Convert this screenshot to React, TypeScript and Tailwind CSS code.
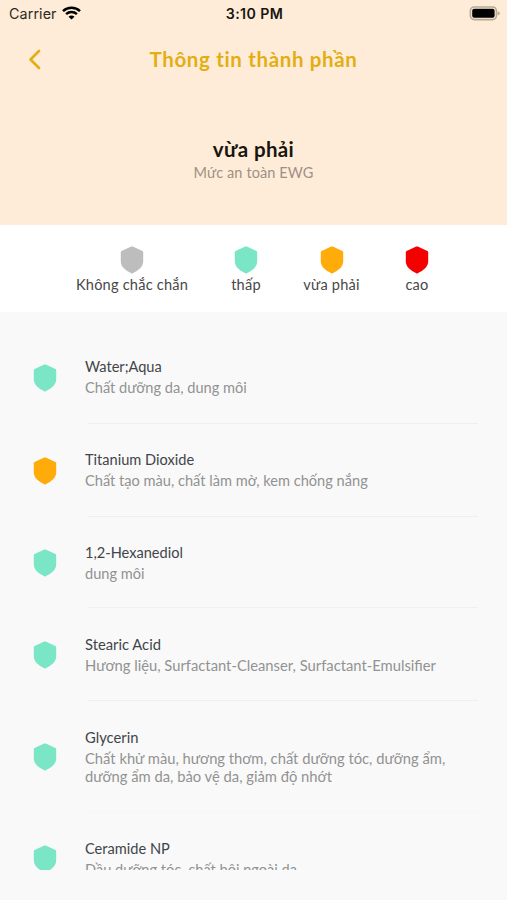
const TONES = {
  unknown: '#bdbdbd',
  low: '#7ae6c5',
  moderate: '#ffab0a',
  high: '#f50000',
};

type Tone = keyof typeof TONES;

function Shield({ tone }: { tone: Tone }) {
  return (
    <svg width="24" height="28" viewBox="0 0 24 28" className="block shrink-0" fill={TONES[tone]}>
      <path d="M11.2 0.6 Q12 0.2 12.8 0.6 L22.4 4.9 Q23.2 5.3 23.2 6.2 V15.6 C23.2 20.6 18.6 24.6 12.8 27.2 Q12 27.6 11.2 27.2 C5.4 24.6 0.8 20.6 0.8 15.6 V6.2 Q0.8 5.3 1.6 4.9 Z" />
    </svg>
  );
}

function StatusBar() {
  return (
    <div className="grid h-7 grid-cols-3 items-center pl-[9px] pr-[7px] font-['Inter','Liberation_Sans',sans-serif] text-[14px] text-[#181510]">
      <div className="flex items-center gap-[6px]">
        <span className="text-[14.3px] tracking-[0.1px] text-[#2d2923]">Carrier</span>
        <svg width="19" height="14" viewBox="0 0 19 14" fill="none" stroke="#000" strokeWidth="2.5" className="-mt-[2px] -ml-px">
          <path d="M1 5.1 C5.7 0.6 13.3 0.6 18 5.1" />
          <path d="M4.1 8.2 C7.1 5.4 11.9 5.4 14.9 8.2" />
          <path d="M9.5 13.6 L6.5 10.7 C8.2 9.1 10.8 9.1 12.5 10.7 Z" fill="#000" stroke="none" />
        </svg>
      </div>
      <span className="text-center text-[14.2px] font-semibold tracking-[0.4px]">3:10 PM</span>
      <svg width="31" height="15" viewBox="0 0 31 15" className="-mt-px justify-self-end">
        <rect x="1.4" y="1" width="26" height="12.6" rx="3.8" fill="none" stroke="#b5a996" strokeWidth="1.6" />
        <rect x="3.2" y="2.8" width="22.4" height="9" rx="2" fill="#000" />
        <path d="M28.7 5.2 Q30.8 5.8 30.8 7.3 Q30.8 8.8 28.7 9.4 Z" fill="#b5a996" />
      </svg>
    </div>
  );
}

const legend: { label: string; tone: Tone; width: string }[] = [
  { label: 'Không chắc chắn', tone: 'unknown', width: 'w-[114px]' },
  { label: 'thấp', tone: 'low', width: 'w-[114px]' },
  { label: 'vừa phải', tone: 'moderate', width: 'w-[57px]' },
  { label: 'cao', tone: 'high', width: 'w-[114px]' },
];

type Ingredient = { name: string; uses: string; tone: Tone; height: string; line: string; text: string };

const ingredients: Ingredient[] = [
  { name: 'Water;Aqua', uses: 'Chất dưỡng da, dung môi', tone: 'low', height: 'h-[92px]', line: 'border-[#efefef]', text: 'text-[14.6px]' },
  { name: 'Titanium Dioxide', uses: 'Chất tạo màu, chất làm mờ, kem chống nắng', tone: 'moderate', height: 'h-[93px]', line: 'border-[#efefef]', text: 'text-[14.6px]' },
  { name: '1,2-Hexanediol', uses: 'dung môi', tone: 'low', height: 'h-[91px]', line: 'border-[#f1f1f1]', text: 'text-[14.6px] pt-[2px]' },
  { name: 'Stearic Acid', uses: 'Hương liệu, Surfactant-Cleanser, Surfactant-Emulsifier', tone: 'low', height: 'h-[93px]', line: 'border-[#efefef]', text: 'text-[14.77px]' },
  { name: 'Glycerin', uses: 'Chất khử màu, hương thơm, chất dưỡng tóc, dưỡng ẩm, dưỡng ẩm da, bảo vệ da, giảm độ nhớt', tone: 'low', height: 'h-[112px]', line: 'border-[#f6f6f6]', text: 'text-[14.75px]' },
  { name: 'Ceramide NP', uses: 'Dầu dưỡng tóc, chất bôi ngoài da', tone: 'low', height: 'h-[92px]', line: 'border-transparent', text: 'text-[14.6px] pt-[2px]' },
];

export default function App() {
  return (
    <div className="flex h-[900px] w-[507px] flex-col overflow-hidden bg-[#f9f9f9] font-['Lato','Noto_Sans',sans-serif]">
      <header className="h-[225px] shrink-0 bg-[#ffecd8]">
        <StatusBar />
        <div className="grid h-[62px] grid-cols-[72px_1fr_72px] items-center">
          <svg width="16" height="22" viewBox="0 0 16 22" className="ml-[27px]" fill="none" stroke="#e3ae12" strokeWidth="2.7" strokeLinecap="round" strokeLinejoin="round">
            <path d="M12 3 L3.5 11.5 L12 20" />
          </svg>
          <h1 className="text-center text-[20.5px] font-bold tracking-[0.65px] text-[#e3ae12]">Thông tin thành phần</h1>
        </div>
        <div className="flex flex-col items-center pt-[44px]">
          <p className="text-[20.5px] leading-[30px] font-bold tracking-[0.35px] text-[#181510]">vừa phải</p>
          <p className="text-[14.5px] leading-[18px] tracking-[0.1px] text-[#9c9186]">Mức an toàn EWG</p>
        </div>
      </header>
      <section className="flex h-[87px] shrink-0 bg-white pl-[75px] pt-[21px]">
        {legend.map((item) => (
          <div key={item.label} className={`flex flex-col items-center ${item.width}`}>
            <Shield tone={item.tone} />
            <span className="mt-px text-[14.6px] leading-5 tracking-[0.2px] whitespace-nowrap text-[#484848]">{item.label}</span>
          </div>
        ))}
      </section>
      <main className="h-[558px] shrink-0 overflow-hidden pt-5">
        {ingredients.map((item) => (
          <article key={item.name} className={`flex ${item.height}`}>
            <div className="flex w-[87px] shrink-0 items-center pl-[33px]">
              <Shield tone={item.tone} />
            </div>
            <div className={`mr-[29px] flex flex-1 flex-col justify-center border-b ${item.line}`}>
              <div className={`-ml-[2px] flex flex-col gap-[3px] leading-[18px] ${item.text}`}>
                <h2 className="leading-[18px] text-[#414549]">{item.name}</h2>
                <p className="leading-[18px] text-[#929292]">{item.uses}</p>
              </div>
            </div>
          </article>
        ))}
      </main>
    </div>
  );
}
